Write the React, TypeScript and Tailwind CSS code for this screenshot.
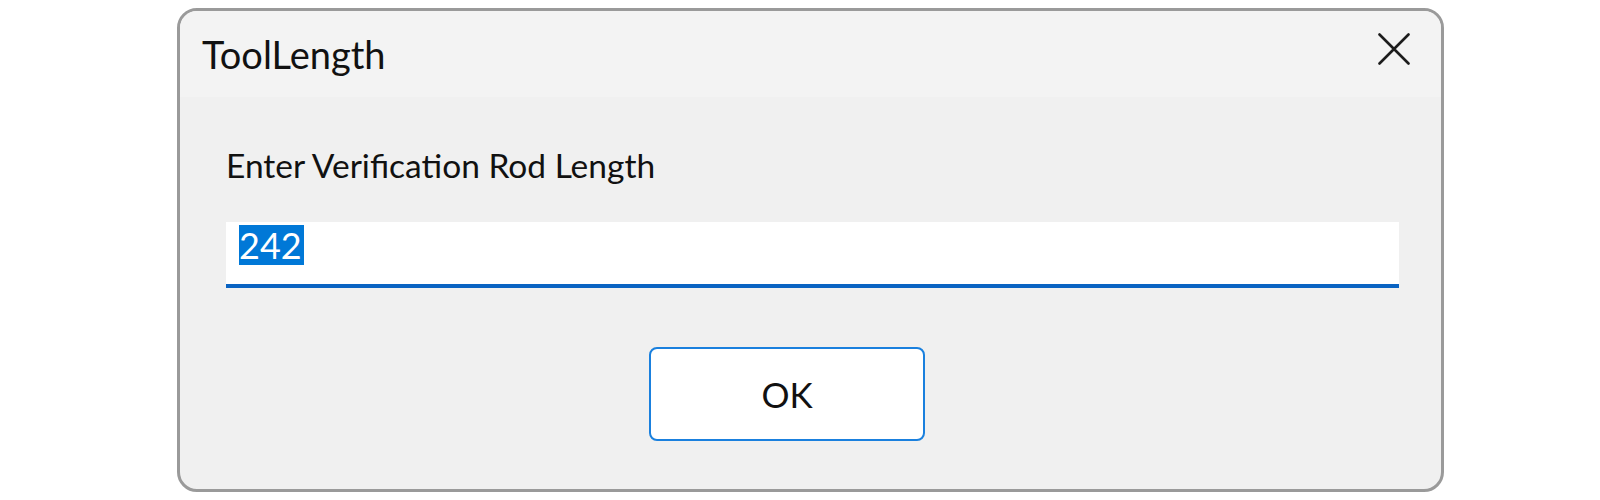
export default function App() {
  return (
    <div className="w-[1600px] h-[500px] bg-white pt-[8px] pl-[177px]">
      <div className="w-[1267px] h-[484px] rounded-[20px] border-[3px] border-[#9a9a9a] bg-[#f0f0f0] overflow-hidden flex flex-col font-['Lato','Noto_Sans',sans-serif] text-[#111111]">
        {/* Title bar */}
        <div className="h-[86px] shrink-0 bg-[#f3f3f3] flex items-start justify-between pl-[22px] pr-[31px]">
          <span className="mt-[19px] text-[38px] leading-[48px]">ToolLength</span>
          <svg className="mt-[22px]" width="32" height="32" viewBox="0 0 32 32" fill="none" stroke="#1c1c1c" strokeWidth="2.6" strokeLinecap="round">
            <path d="M1.5 1.5 L30.5 30.5 M30.5 1.5 L1.5 30.5" />
          </svg>
        </div>

        {/* Body */}
        <div className="flex flex-col pl-[46px] pr-[42px]">
          <span className="mt-[46px] text-[33.5px] leading-[44px]">Enter Verification Rod Length</span>
          <div className="mt-[35px] h-[66px] bg-white border-b-[4px] border-[#0a63c2] flex items-start pt-[3px] pl-[13px]">
            <span className="bg-[#0078d7] text-white text-[36px] leading-[40px] pr-[2px]">242</span>
          </div>
          <div className="flex">
            <button className="mt-[59px] ml-[423px] w-[276px] h-[94px] bg-white border-2 border-[#1a80de] rounded-[8px] text-[35px]">
              OK
            </button>
          </div>
        </div>
      </div>
    </div>
  );
}
